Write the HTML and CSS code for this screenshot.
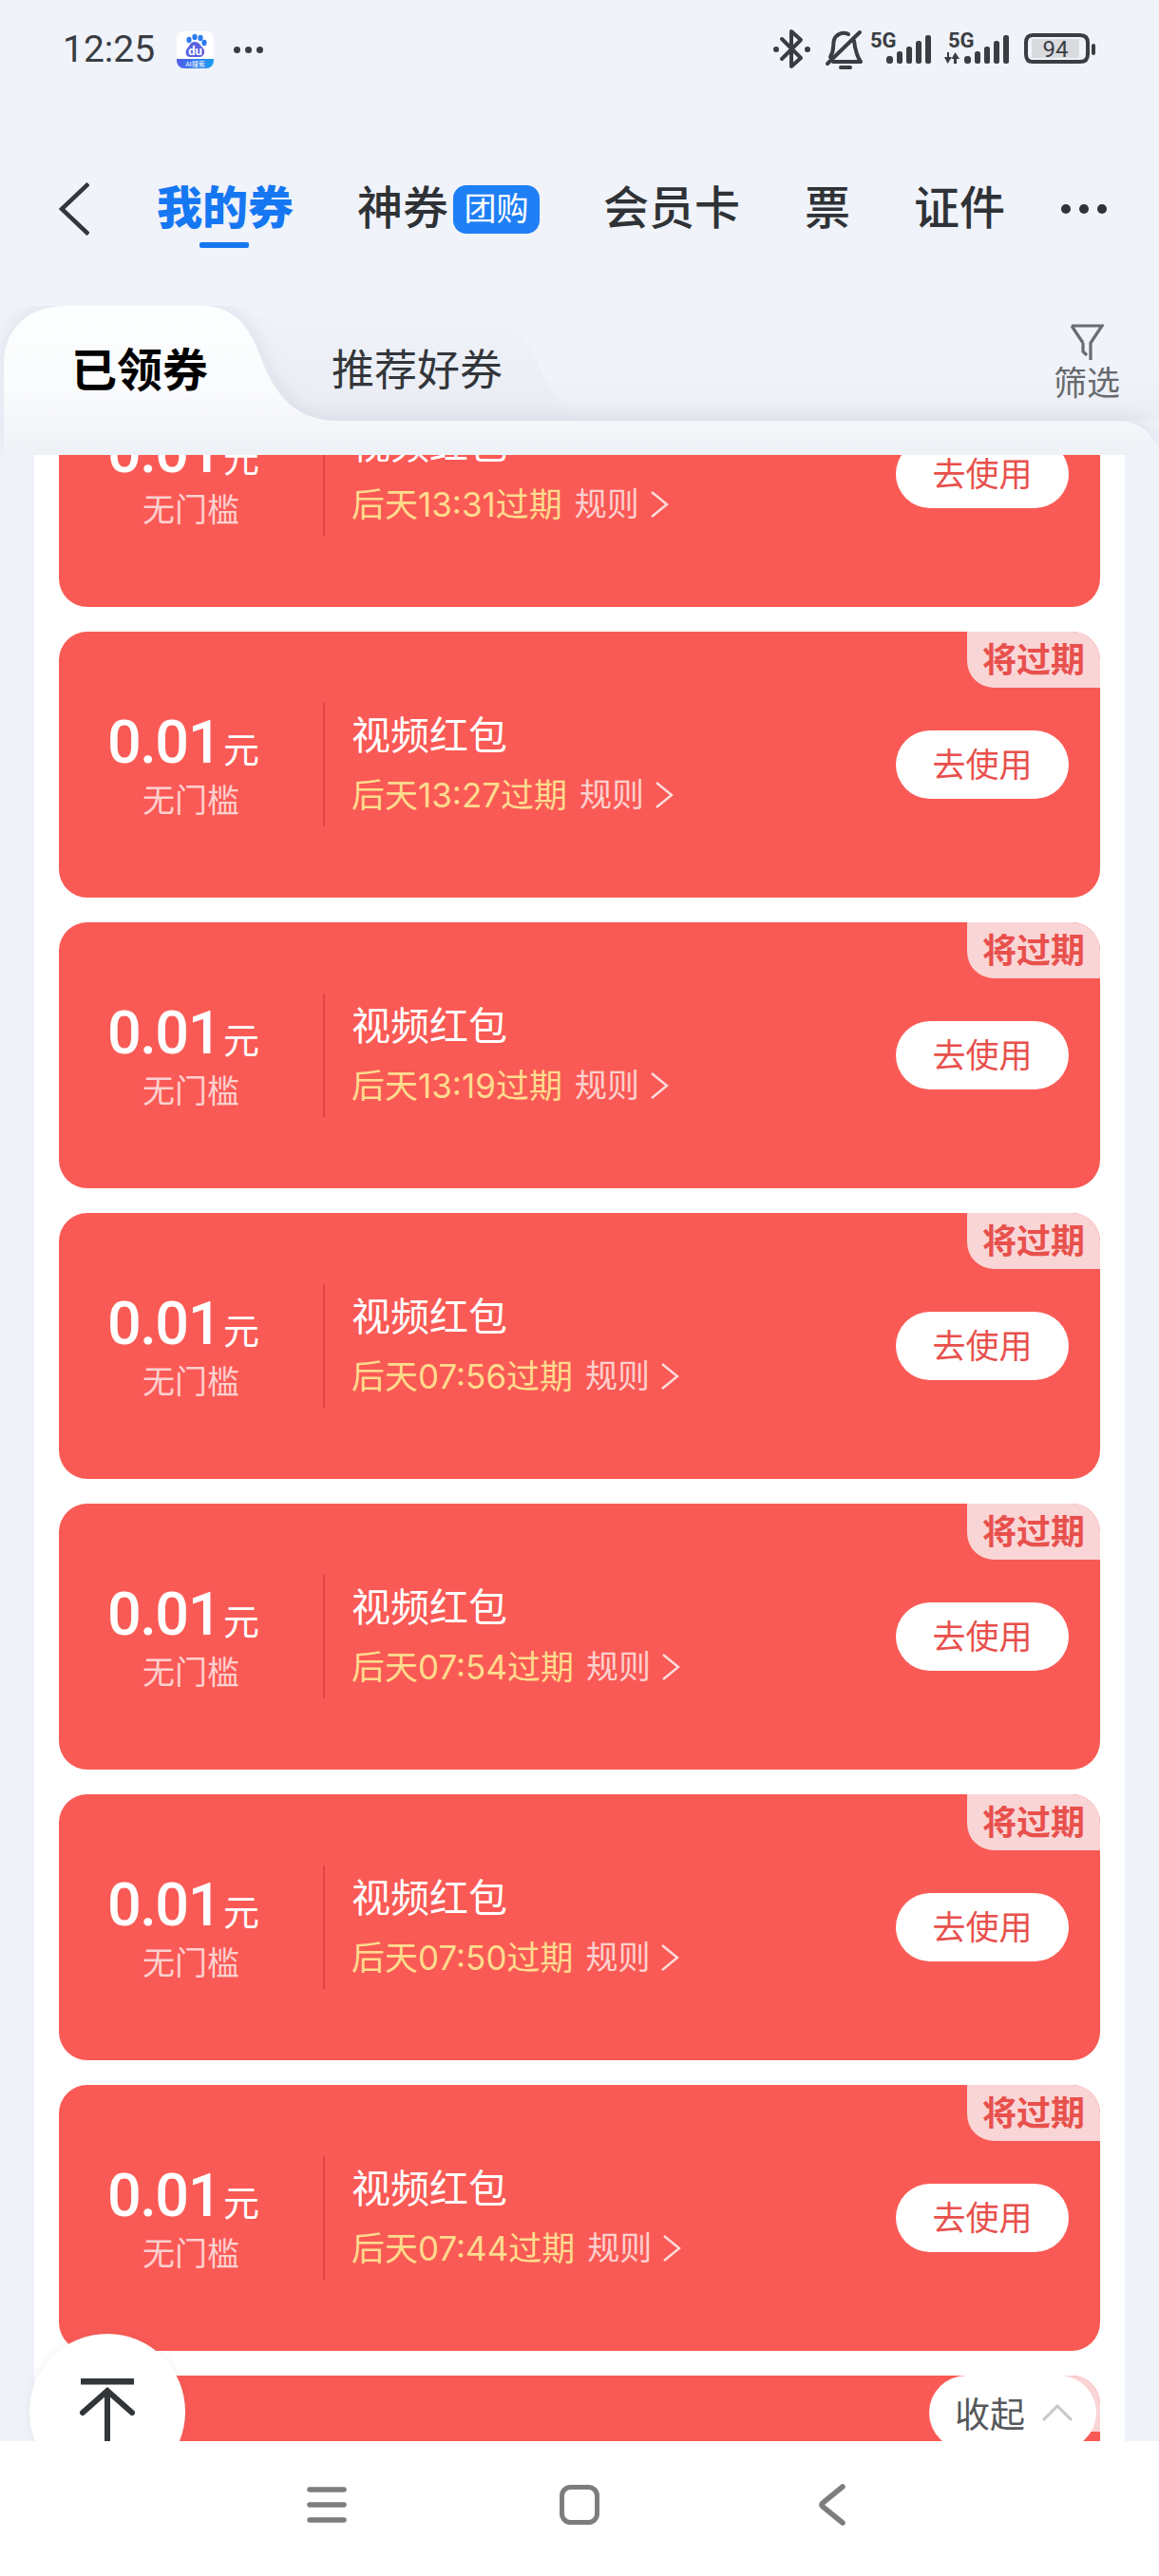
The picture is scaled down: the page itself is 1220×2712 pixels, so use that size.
FILE: index.html
```html
<!DOCTYPE html>
<html lang="zh-CN">
<head>
	<meta charset="UTF-8">
	<meta name="viewport" content="width=device-width, initial-scale=1.0">
	<title>我的券</title>
	<link rel="stylesheet" href="styles.css">
</head>
<body>
<div class="page">

	<!-- Status bar -->
	<div class="status">
		<div class="status-left">
			<span class="clock">12:25</span>
			<svg class="app-icon" width="39" height="39" viewBox="0 0 39 39">
				<defs>
					<linearGradient id="banner" x1="0" x2="1" y1="0" y2="0">
						<stop offset="0" stop-color="#4f5de8"/>
						<stop offset="1" stop-color="#1e9df0"/>
					</linearGradient>
				</defs>
				<rect width="39" height="39" rx="8" fill="#fff"/>
				<path d="M0 29H39V31A8 8 0 0 1 31 39H8A8 8 0 0 1 0 31Z" fill="url(#banner)"/>
				<ellipse cx="13" cy="9" rx="2.6" ry="3.2" fill="#2b7bf0"/>
				<ellipse cx="19" cy="6" rx="2.6" ry="3.2" fill="#2b7bf0"/>
				<ellipse cx="25" cy="7" rx="2.6" ry="3.2" fill="#2b7bf0"/>
				<ellipse cx="29" cy="12" rx="2.6" ry="3.2" fill="#2b7bf0"/>
				<path d="M19 11C24 11 25 15 28 18C31 22 28 27 24 27H14C10 27 8 22 11 18C14 15 14 11 19 11Z" fill="#5a62e0"/>
				<text x="19.5" y="25" class="app-du">du</text>
				<text x="19.5" y="37" class="app-ai">AI搜索</text>
			</svg>
			<span class="status-dots"><i></i><i></i><i></i></span>
		</div>
		<svg class="status-icons" width="340" height="54" viewBox="815 25 340 54">
			<g fill="none" stroke="#3a3d42" stroke-width="4" stroke-linejoin="round" stroke-linecap="round">
				<path d="M824 41L844 61L834 70V33L844 42L824 62"/>
				<path d="M872 67L906 34"/>
				<path d="M875 60C880 52 877 48 879 42C881 36 888 33 894 36"/>
				<path d="M900 43C901 51 902 58 907 65H878"/>
				<path d="M886 71H896"/>
				<path d="M1081 45C1081 39 1084 37 1088 37H1138C1143 37 1146 39 1146 45V57C1146 63 1143 65 1138 65H1088C1084 65 1081 63 1081 57Z"/>
			</g>
			<g fill="#3a3d42">
				<circle cx="818" cy="52" r="3"/>
				<circle cx="851" cy="52" r="3"/>
				<!-- first signal -->
				<rect x="934" y="59" width="7" height="8" rx="3"/>
				<rect x="945" y="54" width="6" height="13" rx="2.5"/>
				<rect x="955" y="49" width="6" height="18" rx="2.5"/>
				<rect x="965" y="43" width="6" height="24" rx="2.5"/>
				<rect x="975" y="37" width="6" height="30" rx="2.5"/>
				<!-- second signal -->
				<rect x="1016" y="59" width="7" height="8" rx="3"/>
				<rect x="1027" y="54" width="6" height="13" rx="2.5"/>
				<rect x="1037" y="49" width="6" height="18" rx="2.5"/>
				<rect x="1047" y="43" width="6" height="24" rx="2.5"/>
				<rect x="1057" y="37" width="6" height="30" rx="2.5"/>
				<path d="M1000 55V60H1003L998.500 67L995 60H998V55Z"/>
				<path d="M1005 67V62H1002.500L1006.500 55L1011 62H1008V67Z"/>
				<rect x="1150" y="46" width="4" height="12" rx="2"/>
			</g>
			<rect x="1087" y="41" width="50" height="20" fill="#d9dbdf"/>
			<text x="917" y="50" class="net">5G</text>
			<text x="999" y="50" class="net">5G</text>
			<text x="1112" y="60" class="batt">94</text>
		</svg>
	</div>

	<!-- Top navigation -->
	<div class="nav">
		<svg class="nav-back" width="32" height="56" viewBox="0 0 32 56">
			<path d="M31 1.500L3 28L31 54.500" fill="none" stroke="#33363a" stroke-width="4.500"/>
		</svg>
		<div class="nav-items">
			<div class="nav-item active">我的券</div>
			<div class="nav-item">神券<span class="group-tag">团购</span></div>
			<div class="nav-item">会员卡</div>
			<div class="nav-item nav-ticket">票</div>
			<div class="nav-item">证件</div>
			<div class="nav-more"><i></i><i></i><i></i></div>
		</div>
	</div>

	<!-- Coupon tabs -->
	<div class="tabs">
		<svg class="tabs-shape" width="1220" height="157" viewBox="0 0 1220 157">
			<defs>
				<linearGradient id="sheet" gradientUnits="userSpaceOnUse" x1="0" x2="0" y1="0" y2="157">
					<stop offset="0" stop-color="#fdfeff"/>
					<stop offset="0.55" stop-color="#fafbfd"/>
					<stop offset="0.8" stop-color="#f4f6fa"/>
					<stop offset="1" stop-color="#eef1f6"/>
				</linearGradient>
				<linearGradient id="other" gradientUnits="userSpaceOnUse" x1="0" x2="0" y1="9" y2="121">
					<stop offset="0" stop-color="#eff2f8"/>
					<stop offset="1" stop-color="#e9ecf3"/>
				</linearGradient>
				<linearGradient id="dusk" gradientUnits="userSpaceOnUse" x1="0" x2="0" y1="70" y2="121">
					<stop offset="0" stop-color="#f0f3f9"/>
					<stop offset="1" stop-color="#eaedf3"/>
				</linearGradient>
			</defs>
			<rect x="560" y="70" width="660" height="51" fill="url(#dusk)"/>
			<path d="M200 9H500C535 9 552 30 566 60C578 90 590 110 612 121H200Z" fill="url(#other)"/>
			<path class="tab-main" d="M4 157V62C4 25 28 0 70 0H212C244 0 260 18 273 50C286 86 305 121 356 121H1176C1200 121 1212 135 1220 150V157Z" fill="url(#sheet)"/>
		</svg>
		<div class="tab active">已领券</div>
		<div class="tab">推荐好券</div>
		<div class="filter">
			<svg width="36" height="39" viewBox="0 0 36 39">
				<path d="M2 2H34L22 20V38M14 20L2 2M14 20V29L18 33" fill="none" stroke="#696c70" stroke-width="3.200"/>
			</svg>
			<span>筛选</span>
		</div>
	</div>

	<!-- Coupon list -->
	<div class="main">
		<div class="list">
			<div class="card">
				<span class="expire-tag">将过期</span>
				<div class="amount">
					<div class="price"><b>0.01</b><small>元</small></div>
					<div class="limit">无门槛</div>
				</div>
				<div class="info">
					<div class="name">视频红包</div>
					<div class="meta"><span class="time">后天13:31过期</span><span class="rule">规则</span><svg class="rule-arrow" width="20" height="30" viewBox="0 0 20 30"><path d="M2 2L18 15L2 28" fill="none" stroke="#fdd" stroke-width="2.400"/></svg></div>
				</div>
				<div class="use-btn">去使用</div>
			</div>
			<div class="card">
				<span class="expire-tag">将过期</span>
				<div class="amount">
					<div class="price"><b>0.01</b><small>元</small></div>
					<div class="limit">无门槛</div>
				</div>
				<div class="info">
					<div class="name">视频红包</div>
					<div class="meta"><span class="time">后天13:27过期</span><span class="rule">规则</span><svg class="rule-arrow" width="20" height="30" viewBox="0 0 20 30"><path d="M2 2L18 15L2 28" fill="none" stroke="#fdd" stroke-width="2.400"/></svg></div>
				</div>
				<div class="use-btn">去使用</div>
			</div>
			<div class="card">
				<span class="expire-tag">将过期</span>
				<div class="amount">
					<div class="price"><b>0.01</b><small>元</small></div>
					<div class="limit">无门槛</div>
				</div>
				<div class="info">
					<div class="name">视频红包</div>
					<div class="meta"><span class="time">后天13:19过期</span><span class="rule">规则</span><svg class="rule-arrow" width="20" height="30" viewBox="0 0 20 30"><path d="M2 2L18 15L2 28" fill="none" stroke="#fdd" stroke-width="2.400"/></svg></div>
				</div>
				<div class="use-btn">去使用</div>
			</div>
			<div class="card">
				<span class="expire-tag">将过期</span>
				<div class="amount">
					<div class="price"><b>0.01</b><small>元</small></div>
					<div class="limit">无门槛</div>
				</div>
				<div class="info">
					<div class="name">视频红包</div>
					<div class="meta"><span class="time">后天07:56过期</span><span class="rule">规则</span><svg class="rule-arrow" width="20" height="30" viewBox="0 0 20 30"><path d="M2 2L18 15L2 28" fill="none" stroke="#fdd" stroke-width="2.400"/></svg></div>
				</div>
				<div class="use-btn">去使用</div>
			</div>
			<div class="card">
				<span class="expire-tag">将过期</span>
				<div class="amount">
					<div class="price"><b>0.01</b><small>元</small></div>
					<div class="limit">无门槛</div>
				</div>
				<div class="info">
					<div class="name">视频红包</div>
					<div class="meta"><span class="time">后天07:54过期</span><span class="rule">规则</span><svg class="rule-arrow" width="20" height="30" viewBox="0 0 20 30"><path d="M2 2L18 15L2 28" fill="none" stroke="#fdd" stroke-width="2.400"/></svg></div>
				</div>
				<div class="use-btn">去使用</div>
			</div>
			<div class="card">
				<span class="expire-tag">将过期</span>
				<div class="amount">
					<div class="price"><b>0.01</b><small>元</small></div>
					<div class="limit">无门槛</div>
				</div>
				<div class="info">
					<div class="name">视频红包</div>
					<div class="meta"><span class="time">后天07:50过期</span><span class="rule">规则</span><svg class="rule-arrow" width="20" height="30" viewBox="0 0 20 30"><path d="M2 2L18 15L2 28" fill="none" stroke="#fdd" stroke-width="2.400"/></svg></div>
				</div>
				<div class="use-btn">去使用</div>
			</div>
			<div class="card">
				<span class="expire-tag">将过期</span>
				<div class="amount">
					<div class="price"><b>0.01</b><small>元</small></div>
					<div class="limit">无门槛</div>
				</div>
				<div class="info">
					<div class="name">视频红包</div>
					<div class="meta"><span class="time">后天07:44过期</span><span class="rule">规则</span><svg class="rule-arrow" width="20" height="30" viewBox="0 0 20 30"><path d="M2 2L18 15L2 28" fill="none" stroke="#fdd" stroke-width="2.400"/></svg></div>
				</div>
				<div class="use-btn">去使用</div>
			</div>
			<div class="card">
				<span class="expire-tag">将过期</span>
			</div>
		</div>

		<!-- Floating buttons -->
		<div class="to-top">
			<svg width="60" height="66" viewBox="0 0 60 66">
				<path d="M2 3H58" fill="none" stroke="#333639" stroke-width="7"/>
				<path d="M4 36L30 13L56 36M30 13V66" fill="none" stroke="#333639" stroke-width="6" stroke-linecap="round"/>
			</svg>
		</div>
		<div class="collapse">
			<span>收起</span>
			<svg width="32" height="18" viewBox="0 0 32 18"><path d="M1 17L16 2L31 17" fill="none" stroke="#c8c8c8" stroke-width="3"/></svg>
		</div>
	</div>

	<!-- System navigation -->
	<div class="sysbar">
		<svg width="42" height="38" viewBox="0 0 42 38">
			<path d="M3 3H39M3 19H39M3 35H39" fill="none" stroke="#7d7d7d" stroke-width="5.500" stroke-linecap="round"/>
		</svg>
		<svg class="sys-home" width="42" height="42" viewBox="0 0 42 42">
			<rect x="2.500" y="2.500" width="37" height="37" rx="9" fill="none" stroke="#7d7d7d" stroke-width="5"/>
		</svg>
		<svg width="28" height="44" viewBox="0 0 28 44">
			<path d="M25 3L4 20Q2 22 4 24L25 41" fill="none" stroke="#7d7d7d" stroke-width="5.500" stroke-linecap="round"/>
		</svg>
	</div>
</div>
</body>
</html>
```

FILE: styles.css
```css
* {
	box-sizing: border-box;
}

body {
	margin: 0;
	padding: 0;
	background-color: #f0f3f9;
	font-family: Roboto, "Noto Sans CJK SC", sans-serif;
	color: #33363a;
}

.page {
	display: flex;
	flex-direction: column;
	height: 2712px;
	overflow: hidden;
}

/* status bar */
.status {
	display: flex;
	align-items: center;
	justify-content: space-between;
	height: 104px;
	padding: 0 66px;
	flex-shrink: 0;
}

.status-left {
	display: flex;
	align-items: center;
}

.clock {
	font-size: 39px;
	line-height: 44px;
	color: #3a3d42;
}

.app-icon {
	margin-left: 23px;
}

.app-du {
	font-size: 13px;
	font-weight: 700;
	fill: #fff;
	text-anchor: middle;
}

.app-ai {
	font-size: 7px;
	fill: #fff;
	text-anchor: middle;
}

.status-dots {
	display: flex;
	gap: 5px;
	margin-left: 21px;
}

.status-dots i {
	width: 7px;
	height: 7px;
	border-radius: 50%;
	background-color: #3a3d42;
}

.net {
	font-size: 22px;
	font-weight: 700;
	fill: #3a3d42;
}

.batt {
	font-size: 24px;
	fill: #3a3d42;
	text-anchor: middle;
}

/* top nav */
.nav {
	display: flex;
	align-items: center;
	height: 100px;
	margin-top: 66px;
	padding-left: 62px;
	flex-shrink: 0;
}

.nav-items {
	display: flex;
	align-items: center;
	margin-left: 71px;
	gap: 67px;
}

.nav-item {
	position: relative;
	display: flex;
	align-items: center;
	font-size: 48px;
	line-height: 60px;
	font-weight: 500;
	color: #2f3236;
}

.nav-item.active {
	font-weight: 900;
	color: #1677f2;
}

.nav-item.active::after {
	content: "";
	position: absolute;
	left: 45px;
	bottom: -11px;
	width: 52px;
	height: 6px;
	border-radius: 2px;
	background-color: #1677f2;
}

.nav-ticket {
	margin-left: 1px;
}

.group-tag {
	display: block;
	width: 91px;
	height: 51px;
	margin-left: 5px;
	border-radius: 14px;
	background-color: #1f7ff5;
	color: #fff;
	font-size: 34px;
	line-height: 50px;
	font-weight: 400;
	text-align: center;
}

.nav-more {
	display: flex;
	gap: 9px;
	margin-left: -8px;
}

.nav-more i {
	width: 10px;
	height: 10px;
	border-radius: 50%;
	background-color: #2f3236;
}

/* tabs */
.tabs {
	position: relative;
	display: flex;
	align-items: flex-start;
	height: 157px;
	margin-top: 52px;
	padding-top: 41px;
	padding-left: 75px;
	flex-shrink: 0;
}

.tabs-shape {
	position: absolute;
	left: 0;
	top: 0;
}

.tab-main {
	filter: drop-shadow(0 -3px 10px rgba(110, 120, 150, 0.14));
}

.tab {
	position: relative;
	font-size: 45px;
	line-height: 56px;
	color: #33363a;
	margin-left: 130px;
}

.tab.active {
	font-size: 48px;
	font-weight: 700;
	color: #000;
	margin-left: 0;
}

.filter {
	position: relative;
	display: flex;
	flex-direction: column;
	align-items: center;
	margin-left: auto;
	margin-top: -22px;
	margin-right: 41px;
	font-size: 35px;
	line-height: 42px;
	color: #66696d;
}

.filter svg {
	display: block;
	margin-bottom: 4px;
}

/* coupon list */
.main {
	position: relative;
	flex: 1;
	overflow: hidden;
	background-color: #eff3f9;
}

.list {
	display: flex;
	flex-direction: column;
	gap: 26px;
	height: 100%;
	margin: 0 36px;
	padding: 0 26px;
	background-color: #fff;
	overflow: hidden;
}

.card {
	position: relative;
	display: flex;
	align-items: center;
	flex-shrink: 0;
	height: 280px;
	border-radius: 30px;
	background-color: #fa5a55;
	color: #fff;
}

.card:first-child {
	margin-top: -120px;
}

.expire-tag {
	position: absolute;
	top: 0;
	right: 0;
	width: 140px;
	height: 59px;
	border-radius: 0 30px 0 28px;
	background-color: #fad5d6;
	color: #e8504c;
	font-size: 36px;
	line-height: 63px;
	font-weight: 700;
	text-align: center;
}

.amount {
	width: 278px;
	flex-shrink: 0;
	text-align: center;
}

.price {
	display: flex;
	align-items: baseline;
	justify-content: center;
	margin-top: 7px;
	padding-right: 16px;
	line-height: 60px;
}

.price b {
	font-size: 63px;
	font-weight: 500;
	letter-spacing: -1.500px;
}

.price small {
	font-size: 38px;
	margin-left: 3px;
}

.limit {
	margin-top: 0;
	font-size: 34px;
	line-height: 46px;
	color: rgba(255, 255, 255, 0.72);
}

.info {
	height: 130px;
	padding-left: 28px;
	border-left: 2px solid rgba(214, 64, 62, 0.75);
}

.name {
	font-size: 41px;
	line-height: 50px;
	font-weight: 400;
	margin-top: 10px;
}

.meta {
	display: flex;
	align-items: center;
	margin-top: 15px;
	font-size: 34px;
	line-height: 44px;
	white-space: nowrap;
}

.time {
	font-family: Inter, "Noto Sans CJK SC", sans-serif;
	font-size: 35px;
	color: #ffdb8e;
}

.rule {
	margin-left: 13px;
	color: rgba(255, 255, 255, 0.72);
}

.rule-arrow {
	margin-left: 11px;
}

.use-btn {
	width: 182px;
	height: 72px;
	margin-left: auto;
	margin-right: 33px;
	border-radius: 36px;
	background-color: #fff;
	color: #e8504c;
	font-size: 35px;
	line-height: 75px;
	text-align: center;
}

/* floating buttons */
.to-top {
	position: absolute;
	left: 31px;
	top: 1978px;
	display: flex;
	justify-content: center;
	width: 164px;
	height: 164px;
	padding-top: 47px;
	border-radius: 50%;
	background-color: #fff;
	box-shadow: 0 0 10px rgba(60, 60, 80, 0.08);
}

.to-top svg {
	display: block;
}

.collapse {
	position: absolute;
	left: 978px;
	top: 2022px;
	display: flex;
	align-items: center;
	gap: 18px;
	width: 176px;
	height: 78px;
	padding-left: 27px;
	border-radius: 39px;
	background-color: #fff;
	color: #55585c;
	font-size: 37px;
}

/* bottom system bar */
.sysbar {
	position: relative;
	display: flex;
	align-items: center;
	flex-shrink: 0;
	height: 142px;
	padding: 0 0 8px 323px;
	background-color: #fff;
}

.sysbar svg {
	display: block;
}

.sys-home {
	margin: 0 231px 0 224px;
}
```
